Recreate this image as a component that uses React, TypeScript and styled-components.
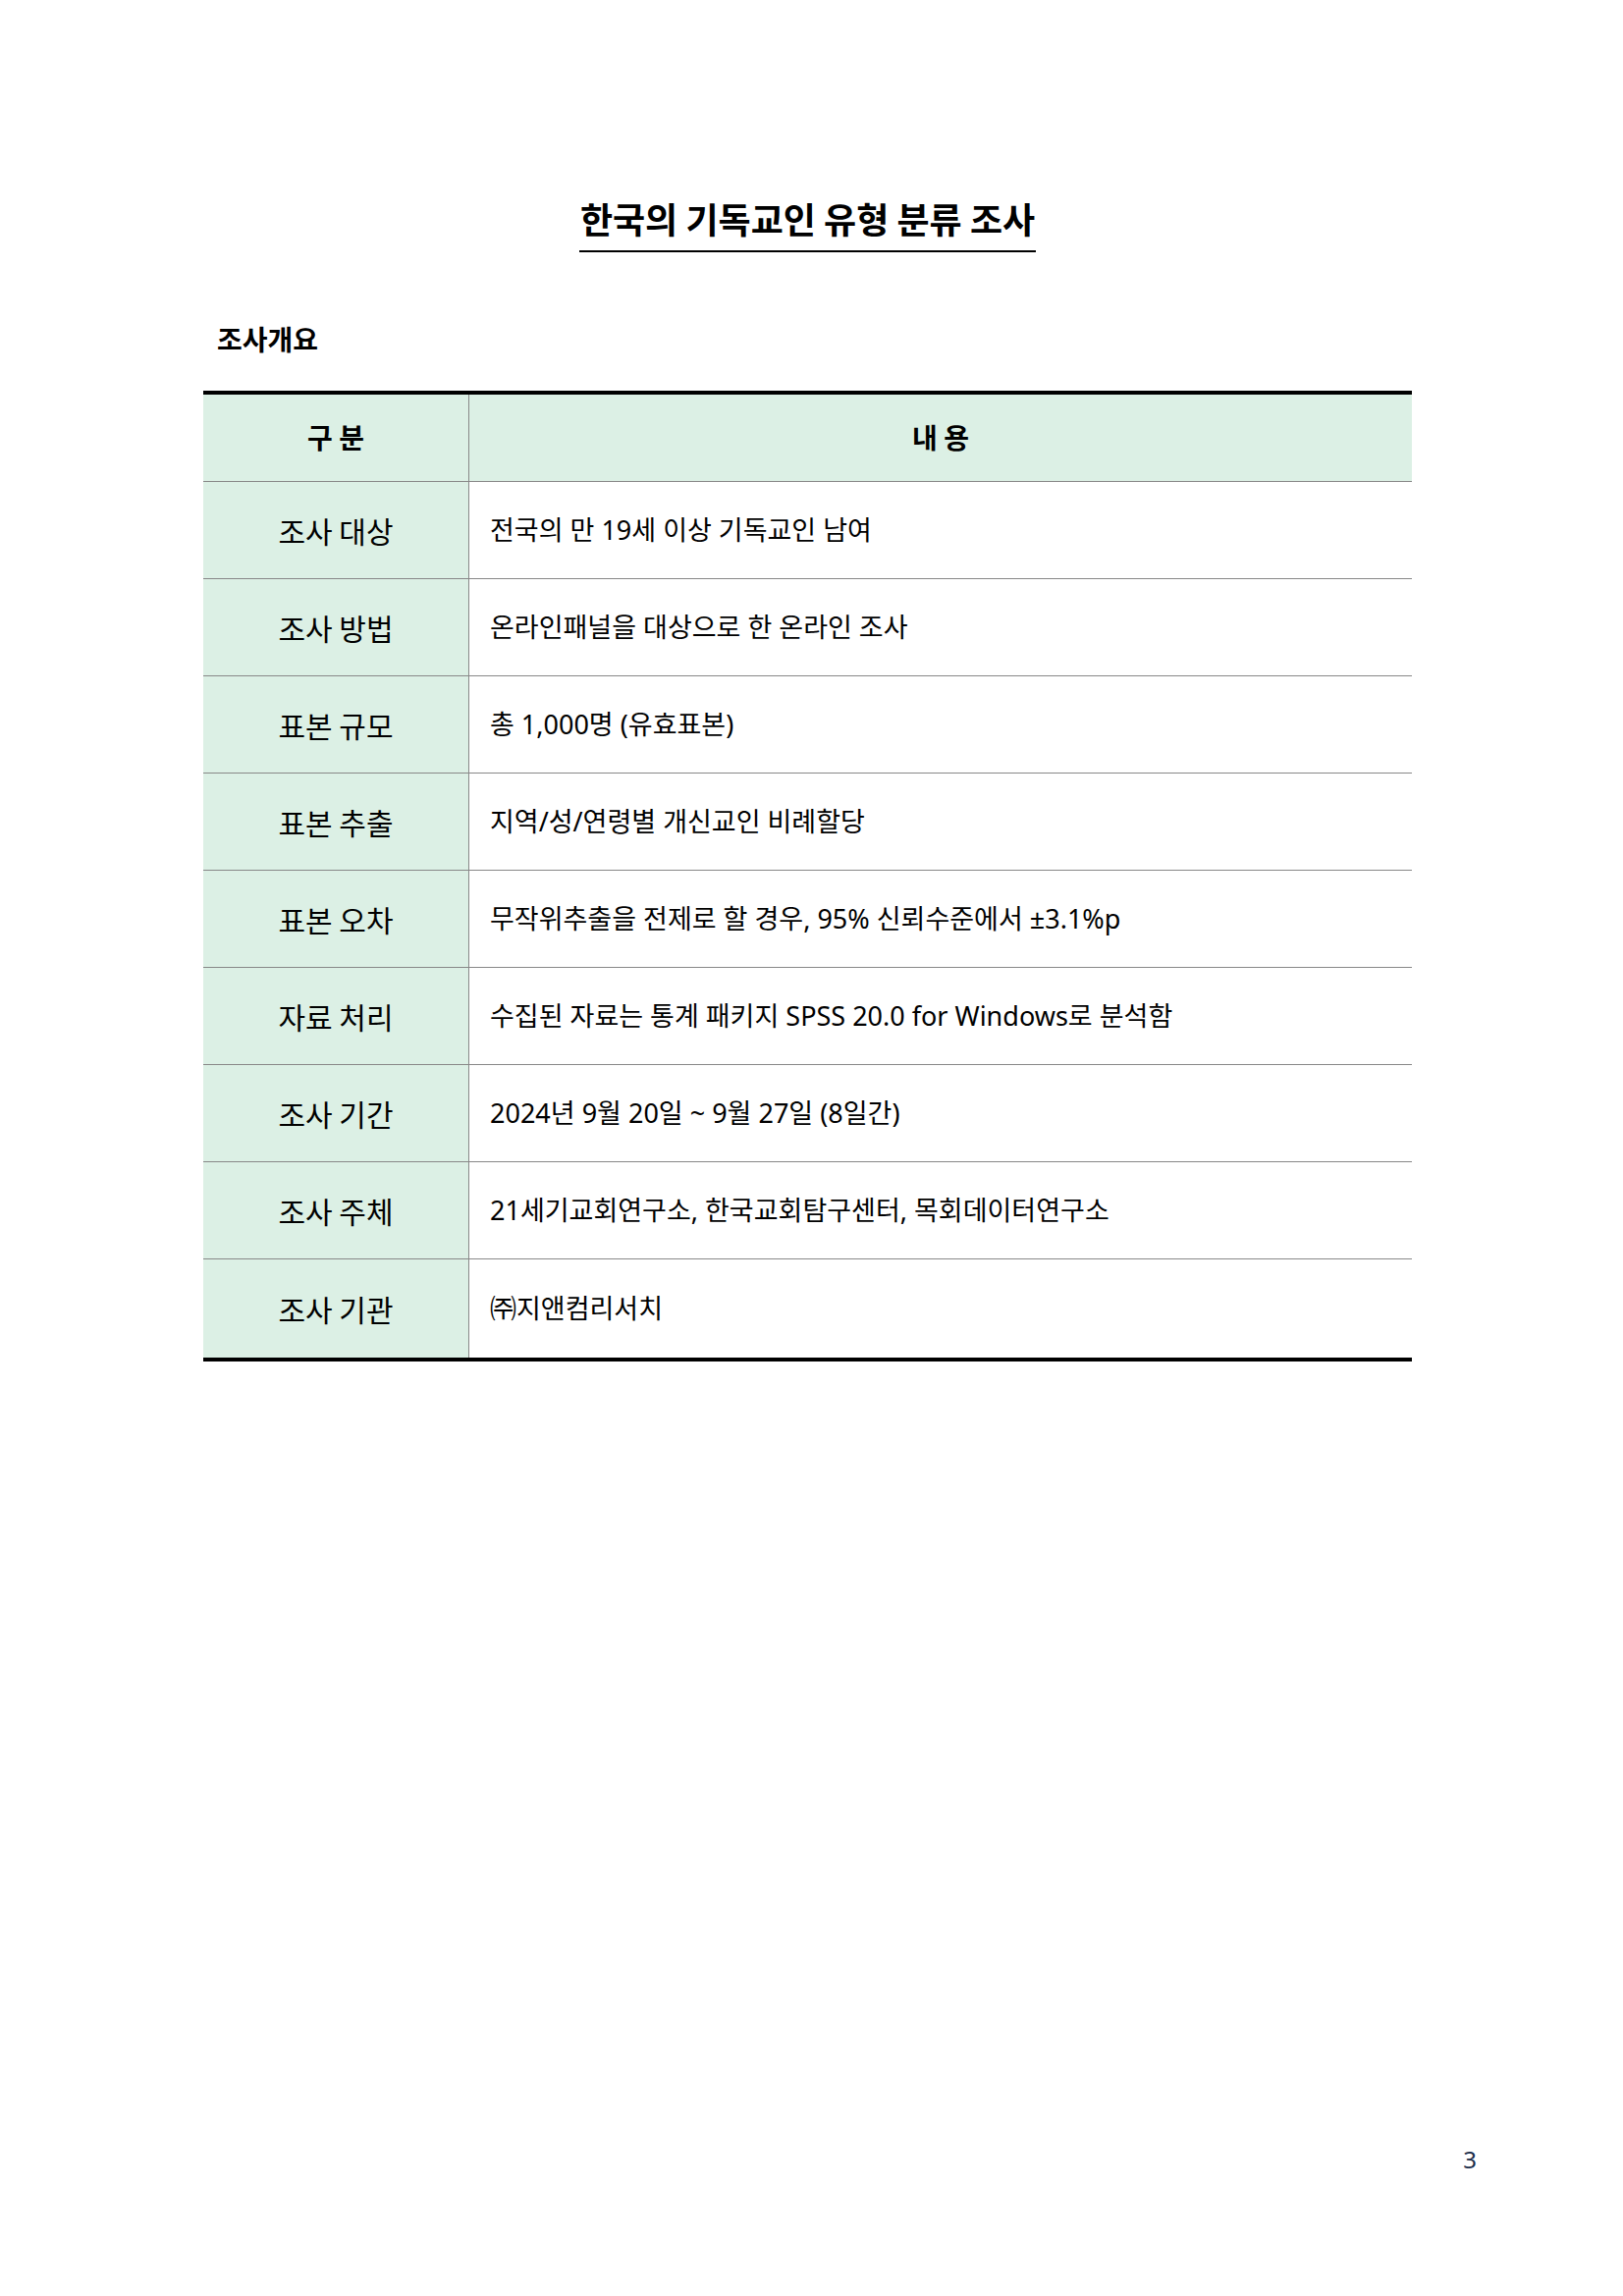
import React from "react";
import styled, { createGlobalStyle } from "styled-components";

const GlobalStyle = createGlobalStyle`
  html, body {
    margin: 0;
    padding: 0;
    background: #ffffff;
  }
  body {
    font-family: "Noto Sans", "Noto Sans CJK KR", sans-serif;
    color: #000000;
  }
`;

const Page = styled.div`
  width: 1653px;
  min-height: 2339px;
  box-sizing: border-box;
  padding: 201px 215px 124px 207px;
  display: flex;
  flex-direction: column;
  background: #ffffff;
`;

const TitleWrap = styled.div`
  display: flex;
  justify-content: center;
`;

const Title = styled.h1`
  margin: 0;
  display: inline-block;
  font-family: "Noto Sans CJK KR", sans-serif;
  font-size: 36px;
  font-weight: 700;
  line-height: 1.2;
  padding: 0 1px 11px;
  border-bottom: 2px solid #000000;
`;

const SectionHeading = styled.h2`
  margin: 72px 0 35px 14px;
  font-family: "Noto Sans CJK KR", sans-serif;
  font-size: 28px;
  font-weight: 700;
  line-height: 1.2;
`;

const Table = styled.table`
  width: 1231px;
  border-collapse: separate;
  border-spacing: 0;
  border-top: 4px solid #000000;
  border-bottom: 4px solid #000000;
  table-layout: fixed;
`;

const HeadCell = styled.th<{ $first?: boolean }>`
  width: ${(p) => (p.$first ? "270px" : "auto")};
  height: 88px;
  padding: 0;
  background: #dcf0e5;
  border-bottom: 1px solid #888888;
  border-right: ${(p) => (p.$first ? "1px solid #888888" : "none")};
  font-family: "Noto Sans CJK KR", sans-serif;
  font-size: 28px;
  font-weight: 700;
  text-align: center;
  vertical-align: middle;
  line-height: 1.2;
`;

const LabelCell = styled.td<{ $last?: boolean }>`
  height: ${(p) => (p.$last ? "100px" : "98px")};
  padding: 0;
  background: #dcf0e5;
  border-right: 1px solid #888888;
  border-bottom: ${(p) => (p.$last ? "none" : "1px solid #888888")};
  font-family: "Noto Sans CJK KR", sans-serif;
  font-size: 30px;
  font-weight: 400;
  text-align: center;
  vertical-align: middle;
  line-height: 1.2;
`;

const ValueCell = styled.td<{ $last?: boolean }>`
  padding: 0 0 0 21px;
  background: #ffffff;
  border-bottom: ${(p) => (p.$last ? "none" : "1px solid #888888")};
  font-family: "Noto Sans", "Noto Sans CJK KR", sans-serif;
  font-size: 27px;
  font-weight: 400;
  text-align: left;
  vertical-align: middle;
  line-height: 1.2;
  white-space: nowrap;
`;

const Footer = styled.div`
  margin-top: auto;
  margin-right: -66px;
  display: flex;
  justify-content: flex-end;
`;

const PageNumber = styled.span`
  font-family: "Noto Sans", sans-serif;
  font-size: 24px;
  font-weight: 400;
  color: #1c2d4a;
  line-height: 1.2;
`;

const rows: [string, string][] = [
  ["조사 대상", "전국의 만 19세 이상 기독교인 남여"],
  ["조사 방법", "온라인패널을 대상으로 한 온라인 조사"],
  ["표본 규모", "총 1,000명 (유효표본)"],
  ["표본 추출", "지역/성/연령별 개신교인 비례할당"],
  ["표본 오차", "무작위추출을 전제로 할 경우, 95% 신뢰수준에서 ±3.1%p"],
  ["자료 처리", "수집된 자료는 통계 패키지 SPSS 20.0 for Windows로 분석함"],
  ["조사 기간", "2024년 9월 20일 ~ 9월 27일 (8일간)"],
  ["조사 주체", "21세기교회연구소, 한국교회탐구센터, 목회데이터연구소"],
  ["조사 기관", "㈜지앤컴리서치"],
];

export default function App() {
  return (
    <>
      <GlobalStyle />
      <Page>
        <TitleWrap>
          <Title>한국의 기독교인 유형 분류 조사</Title>
        </TitleWrap>
        <SectionHeading>조사개요</SectionHeading>
        <Table>
          <thead>
            <tr>
              <HeadCell $first>구 분</HeadCell>
              <HeadCell>내 용</HeadCell>
            </tr>
          </thead>
          <tbody>
            {rows.map(([label, value], i) => (
              <tr key={label}>
                <LabelCell $last={i === rows.length - 1}>{label}</LabelCell>
                <ValueCell $last={i === rows.length - 1}>{value}</ValueCell>
              </tr>
            ))}
          </tbody>
        </Table>
        <Footer>
          <PageNumber>3</PageNumber>
        </Footer>
      </Page>
    </>
  );
}
